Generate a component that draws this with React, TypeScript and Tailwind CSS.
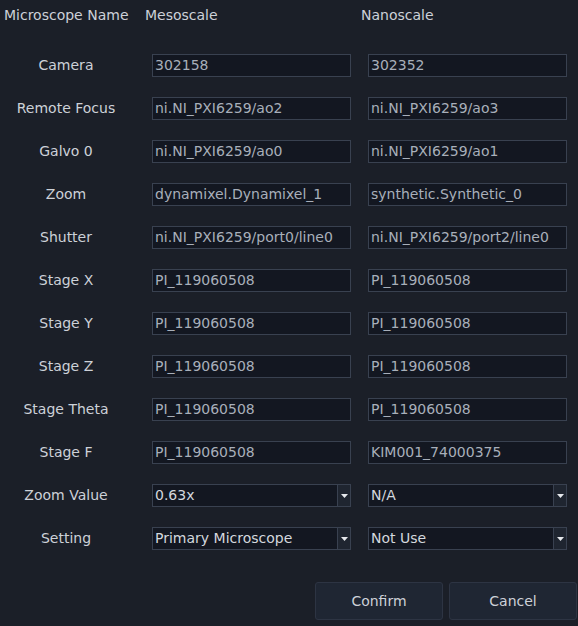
import React from "react";

const rows: { label: string; a: string; b: string; combo?: boolean }[] = [
  { label: "Camera", a: "302158", b: "302352" },
  { label: "Remote Focus", a: "ni.NI_PXI6259/ao2", b: "ni.NI_PXI6259/ao3" },
  { label: "Galvo 0", a: "ni.NI_PXI6259/ao0", b: "ni.NI_PXI6259/ao1" },
  { label: "Zoom", a: "dynamixel.Dynamixel_1", b: "synthetic.Synthetic_0" },
  { label: "Shutter", a: "ni.NI_PXI6259/port0/line0", b: "ni.NI_PXI6259/port2/line0" },
  { label: "Stage X", a: "PI_119060508", b: "PI_119060508" },
  { label: "Stage Y", a: "PI_119060508", b: "PI_119060508" },
  { label: "Stage Z", a: "PI_119060508", b: "PI_119060508" },
  { label: "Stage Theta", a: "PI_119060508", b: "PI_119060508" },
  { label: "Stage F", a: "PI_119060508", b: "KIM001_74000375" },
  { label: "Zoom Value", a: "0.63x", b: "N/A", combo: true },
  { label: "Setting", a: "Primary Microscope", b: "Not Use", combo: true },
];

function Field({ value, combo }: { value: string; combo?: boolean }) {
  if (combo) {
    return (
      <div className="ml-[7px] flex h-[23px] w-[199px] border border-[#394150] bg-[#131721]">
        <div className="flex flex-1 items-center pl-[2px] text-[#d4d8de]">{value}</div>
        <div className="flex w-[13px] items-center justify-center border-l border-[#394150] bg-[#1f2530]">
          <svg width="7" height="4" viewBox="0 0 7 4">
            <path d="M0 0 H7 L3.5 4 Z" fill="#e6e8ec" />
          </svg>
        </div>
      </div>
    );
  }
  return (
    <div className="ml-[7px] flex h-[23px] w-[199px] items-center border border-[#394150] bg-[#131721] pl-[2px] text-[#a8afba]">
      {value}
    </div>
  );
}

export default function App() {
  return (
    <div
      className="h-[626px] w-[578px] overflow-hidden bg-[#1b1f28] text-[14px] text-[#cdd1d8]"
      style={{ fontFamily: '"DejaVu Sans", sans-serif' }}
    >
      <div className="flex h-[30px] items-center">
        <div className="w-[145px] whitespace-nowrap pl-[4px]">Microscope Name</div>
        <div className="w-[216px]">Mesoscale</div>
        <div className="w-[216px]">Nanoscale</div>
      </div>
      <div className="mt-[14px] flex flex-col">
        {rows.map((r) => (
          <div key={r.label} className="flex h-[43px] items-center">
            <div className="w-[145px] pl-[4px]">
              <div className="w-[124px] text-center">{r.label}</div>
            </div>
            <div className="w-[216px]">
              <Field value={r.a} combo={r.combo} />
            </div>
            <div className="w-[216px]">
              <Field value={r.b} combo={r.combo} />
            </div>
          </div>
        ))}
      </div>
      <div className="mt-[22px] flex justify-end gap-[6px] pr-[1px]">
        <button className="h-[38px] w-[128px] rounded-[3px] border border-[#2d3443] bg-[#1f2633] text-[#cdd1d8]">
          Confirm
        </button>
        <button className="h-[38px] w-[128px] rounded-[3px] border border-[#2d3443] bg-[#1f2633] text-[#cdd1d8]">
          Cancel
        </button>
      </div>
    </div>
  );
}
